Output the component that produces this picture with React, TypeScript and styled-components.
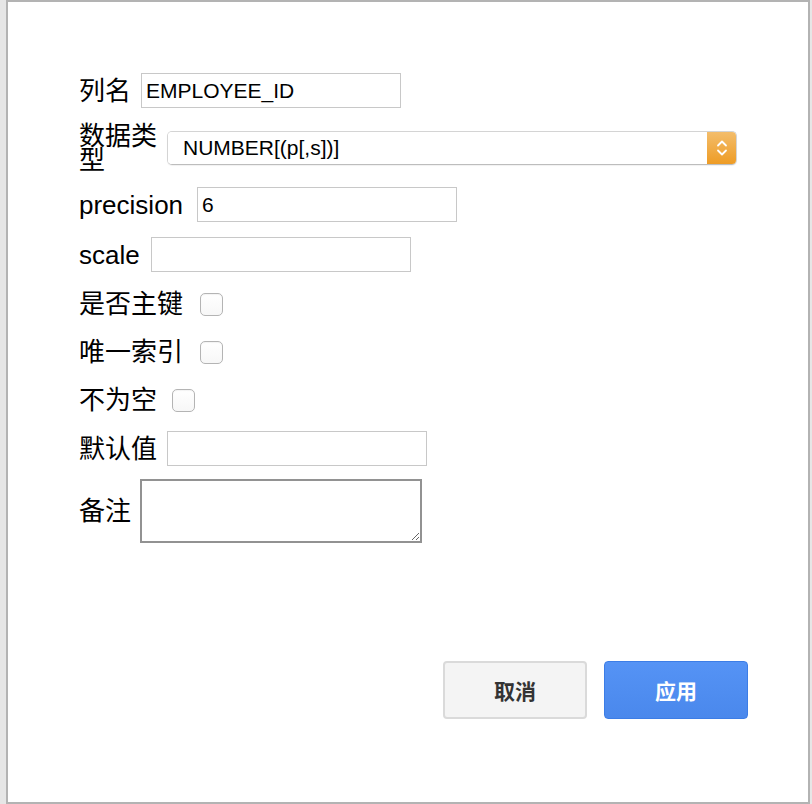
import React, { useState } from 'react';
import styled, { createGlobalStyle } from 'styled-components';

const GlobalStyle = createGlobalStyle`
  html, body {
    margin: 0;
    padding: 0;
    background: #e6e6e6;
    font-family: "Liberation Sans", "Noto Sans CJK SC", sans-serif;
  }
  * { box-sizing: border-box; }
`;

const Dialog = styled.div`
  margin-left: 6px;
  width: 804px;
  height: 804px;
  background: #ffffff;
  border: 2px solid #b3b3b3;
  display: flex;
  flex-direction: column;
  padding: 71px 0 0 71px;
`;

const Form = styled.div`
  display: flex;
  flex-direction: column;
`;

const Row = styled.div<{ $mt?: number; $gap?: number }>`
  display: flex;
  align-items: center;
  gap: ${p => p.$gap ?? 10}px;
  margin-top: ${p => p.$mt ?? 0}px;
`;

const Label = styled.label<{ $width?: number }>`
  font-size: 26px;
  line-height: 24px;
  color: #000;
  ${p => (p.$width ? `width: ${p.$width}px;` : '')}
  flex-shrink: 0;
`;

const TextInput = styled.input`
  width: 260px;
  height: 35px;
  border: 1px solid #c8c8c8;
  padding: 0 4px;
  font-family: "Liberation Sans", "Noto Sans CJK SC", sans-serif;
  font-size: 21px;
  color: #000;
  outline: none;
  background: #fff;
`;

const SelectBox = styled.div`
  display: flex;
  width: 570px;
  height: 34px;
  border: 1px solid #d4d4d4;
  border-bottom-color: #bdbdbd;
  border-radius: 5px;
  box-shadow: 0 1px 1px rgba(0, 0, 0, 0.06);
  overflow: hidden;
`;

const SelectValue = styled.div`
  flex: 1;
  display: flex;
  align-items: center;
  padding-left: 15px;
  font-size: 21px;
  color: #000;
  background: #fff;
`;

const SelectArrow = styled.div`
  width: 29px;
  display: flex;
  align-items: center;
  justify-content: center;
  background: linear-gradient(#f3bd6b, #ee9c25);
`;

const Check = styled.input.attrs({ type: 'checkbox' })<{ $ml?: number }>`
  appearance: none;
  -webkit-appearance: none;
  width: 23px;
  height: 23px;
  margin: 0 0 0 ${p => p.$ml ?? 7}px;
  border: 1px solid #b4b4b4;
  border-radius: 5px;
  background: linear-gradient(#ffffff, #f7f7f7);
  box-shadow: inset 0 1px 1px rgba(0, 0, 0, 0.05);
`;

const Memo = styled.textarea`
  width: 282px;
  height: 64px;
  border: 2px solid #929292;
  font-family: "Liberation Sans", "Noto Sans CJK SC", sans-serif;
  font-size: 16px;
  outline: none;
  margin: 0;
`;

const Footer = styled.div`
  display: flex;
  justify-content: flex-end;
  gap: 17px;
  margin-top: 118px;
  padding-right: 60px;
`;

const Button = styled.button<{ $primary?: boolean }>`
  width: 144px;
  height: 58px;
  border-radius: 4px;
  border: ${p => (p.$primary ? '1px solid #3c7de6' : '2px solid #dadada')};
  background: ${p => (p.$primary ? 'linear-gradient(#5593f5, #4a88ec)' : '#f4f4f4')};
  color: ${p => (p.$primary ? '#ffffff' : '#333333')};
  font-family: "Liberation Sans", "Noto Sans CJK SC", sans-serif;
  font-size: 21px;
  font-weight: bold;
  cursor: pointer;
`;

const Chevrons = () => (
  <svg width="12" height="20" viewBox="0 0 12 20" fill="none" stroke="#fff" strokeWidth="1.8" strokeLinecap="round" strokeLinejoin="round">
    <path d="M2 7.5 L6 3.5 L10 7.5" />
    <path d="M2 12.5 L6 16.5 L10 12.5" />
  </svg>
);

const App: React.FC = () => {
  const [name, setName] = useState('EMPLOYEE_ID');
  const [precision, setPrecision] = useState('6');
  const [scale, setScale] = useState('');
  const [defaultValue, setDefaultValue] = useState('');

  return (
    <>
      <GlobalStyle />
      <Dialog>
        <Form>
          <Row>
            <Label>列名</Label>
            <TextInput value={name} onChange={e => setName(e.target.value)} />
          </Row>
          <Row $mt={16}>
            <Label $width={78}>数据类型</Label>
            <SelectBox>
              <SelectValue>NUMBER[(p[,s])]</SelectValue>
              <SelectArrow>
                <Chevrons />
              </SelectArrow>
            </SelectBox>
          </Row>
          <Row $mt={15} $gap={14}>
            <Label>precision</Label>
            <TextInput value={precision} onChange={e => setPrecision(e.target.value)} />
          </Row>
          <Row $mt={15} $gap={11}>
            <Label>scale</Label>
            <TextInput value={scale} onChange={e => setScale(e.target.value)} />
          </Row>
          <Row $mt={20}>
            <Label>是否主键</Label>
            <Check />
          </Row>
          <Row $mt={24}>
            <Label>唯一索引</Label>
            <Check />
          </Row>
          <Row $mt={24}>
            <Label>不为空</Label>
            <Check $ml={5} />
          </Row>
          <Row $mt={19}>
            <Label>默认值</Label>
            <TextInput value={defaultValue} onChange={e => setDefaultValue(e.target.value)} />
          </Row>
          <Row $mt={13} $gap={9}>
            <Label>备注</Label>
            <Memo />
          </Row>
        </Form>
        <Footer>
          <Button>取消</Button>
          <Button $primary>应用</Button>
        </Footer>
      </Dialog>
    </>
  );
};

export default App;
